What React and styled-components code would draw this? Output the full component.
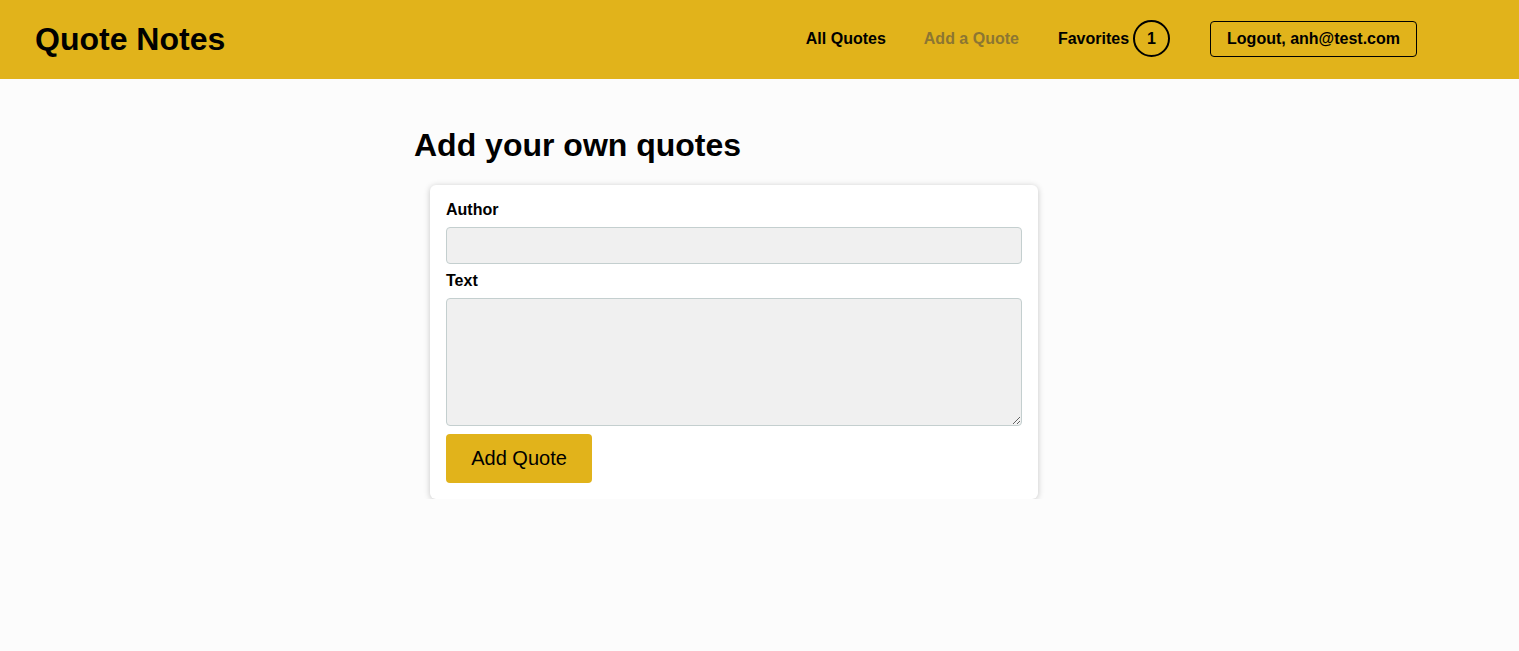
import React from "react";
import styled, { createGlobalStyle } from "styled-components";

const GlobalStyle = createGlobalStyle`
  * { box-sizing: border-box; }
  body {
    margin: 0;
    font-family: "Liberation Sans", Arial, sans-serif;
    background: #fcfcfc;
    color: #000;
  }
`;

export default function App() {
  return (
    <>
      <GlobalStyle />
      <Header>
        <Logo>Quote Notes</Logo>
        <Nav>
          <NavLink>All Quotes</NavLink>
          <NavLink muted>Add a Quote</NavLink>
          <NavLink>
            Favorites <Badge>1</Badge>
          </NavLink>
          <LogoutButton>Logout, anh@test.com</LogoutButton>
        </Nav>
      </Header>
      <Main>
        <Heading>Add your own quotes</Heading>
        <Card>
          <Label>Author</Label>
          <Input type="text" />
          <Label spaced>Text</Label>
          <TextArea rows={5} />
          <SubmitButton>Add Quote</SubmitButton>
        </Card>
      </Main>
    </>
  );
}

const Header = styled.header`
  height: 79px;
  background: #e1b31b;
  display: flex;
  align-items: center;
  justify-content: space-between;
  padding: 0 102px 2px 35px;
`;

const Logo = styled.div`
  font-size: 32px;
  font-weight: 700;
  margin-top: 2px;
`;

const Nav = styled.nav`
  display: flex;
  align-items: center;
  gap: 38px;
`;

const NavLink = styled.a`
  display: flex;
  align-items: center;
  gap: 4px;
  font-size: 16px;
  font-weight: 700;
  color: ${(p) => (p.muted ? "#8c7632" : "#000")};
  margin-right: ${(p) => (p.muted ? "1px" : "0")};
  cursor: pointer;
`;

const Badge = styled.span`
  width: 37px;
  height: 37px;
  border: 2px solid #000;
  border-radius: 50%;
  display: flex;
  align-items: center;
  justify-content: center;
`;

const LogoutButton = styled.button`
  height: 36px;
  padding: 0 16px;
  border: 1px solid #000;
  border-radius: 4px;
  background: transparent;
  font: inherit;
  font-size: 16px;
  font-weight: 700;
  color: #000;
  margin-left: 2px;
`;

const Main = styled.main`
  width: 640px;
  margin-left: 414px;
  padding-top: 48px;
`;

const Heading = styled.h1`
  font-size: 32px;
  font-weight: 700;
  margin: 0 0 21px;
  line-height: 37px;
`;

const Card = styled.form`
  width: 608px;
  margin-left: 16px;
  background: #fff;
  border-radius: 6px;
  box-shadow: 0 1px 6px rgba(0, 0, 0, 0.22);
  padding: 16px;
  display: flex;
  flex-direction: column;
  align-items: flex-start;
`;

const Label = styled.label`
  font-size: 16px;
  font-weight: 700;
  line-height: 18px;
  margin: ${(p) => (p.spaced ? "8px 0 8px" : "0 0 8px")};
`;

const Input = styled.input`
  width: 100%;
  height: 37px;
  background: #f0f0f0;
  border: 1px solid #c4cfcf;
  border-radius: 4px;
  font: inherit;
`;

const TextArea = styled.textarea`
  width: 100%;
  height: 128px;
  background: #f0f0f0;
  border: 1px solid #c4cfcf;
  border-radius: 4px;
  font: inherit;
  display: block;
`;

const SubmitButton = styled.button`
  margin-top: 8px;
  width: 146px;
  height: 49px;
  background: #e1b31b;
  border: none;
  border-radius: 4px;
  font-family: inherit;
  font-size: 20px;
  color: #000;
`;
